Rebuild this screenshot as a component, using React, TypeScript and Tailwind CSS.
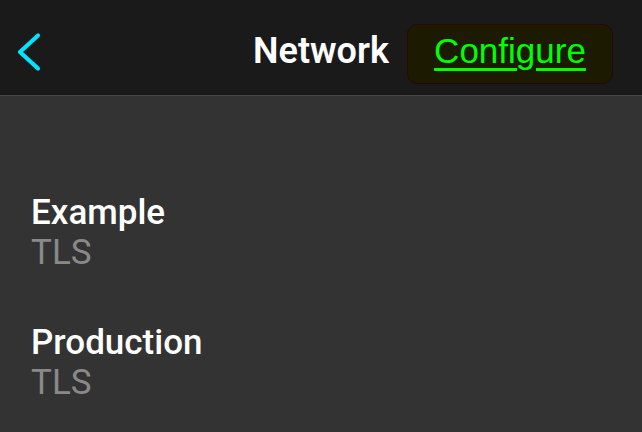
import React from "react";

export default function App() {
  return (
    <div className="w-[642px] h-[432px] overflow-hidden bg-[#333333] flex flex-col" style={{ fontFamily: "Roboto, 'Noto Sans', sans-serif" }}>
      <header className="relative h-[96px] shrink-0 bg-[#1a1a1a] border-b border-[#474747] flex items-start">
        <button className="ml-[15px] mt-[32px] w-[28px] h-[40px] flex items-center justify-center">
          <svg width="28" height="40" viewBox="0 0 28 40">
            <polyline points="23,3.5 5,20 23,36.5" fill="none" stroke="#00e5ff" strokeWidth="4.2" strokeLinecap="round" strokeLinejoin="round" />
          </svg>
        </button>
        <div className="absolute left-0 right-0 top-[31px] flex justify-center pointer-events-none">
          <span className="text-white text-[36px] font-semibold leading-[40px]">Network</span>
        </div>
        <div className="ml-auto mr-[29px] mt-[24px] h-[60px] w-[206px] rounded-[10px] bg-[#1c1a00] border border-[#2e0505] flex items-center justify-center pb-[6px]">
          <span className="text-[#00ff00] text-[35px] leading-[40px] underline underline-offset-[5px] decoration-[2.5px]" style={{ fontFamily: "'Liberation Sans', Arial, sans-serif" }}>
            Configure
          </span>
        </div>
      </header>
      <main className="flex flex-col gap-[50px] pt-[97px] pl-[31px]">
        <div className="flex flex-col">
          <span className="text-white text-[35px] font-medium leading-[40px]">Example</span>
          <span className="text-[#898989] text-[35px] leading-[40px]">TLS</span>
        </div>
        <div className="flex flex-col">
          <span className="text-white text-[35px] font-medium leading-[40px]">Production</span>
          <span className="text-[#898989] text-[35px] leading-[40px]">TLS</span>
        </div>
      </main>
    </div>
  );
}
